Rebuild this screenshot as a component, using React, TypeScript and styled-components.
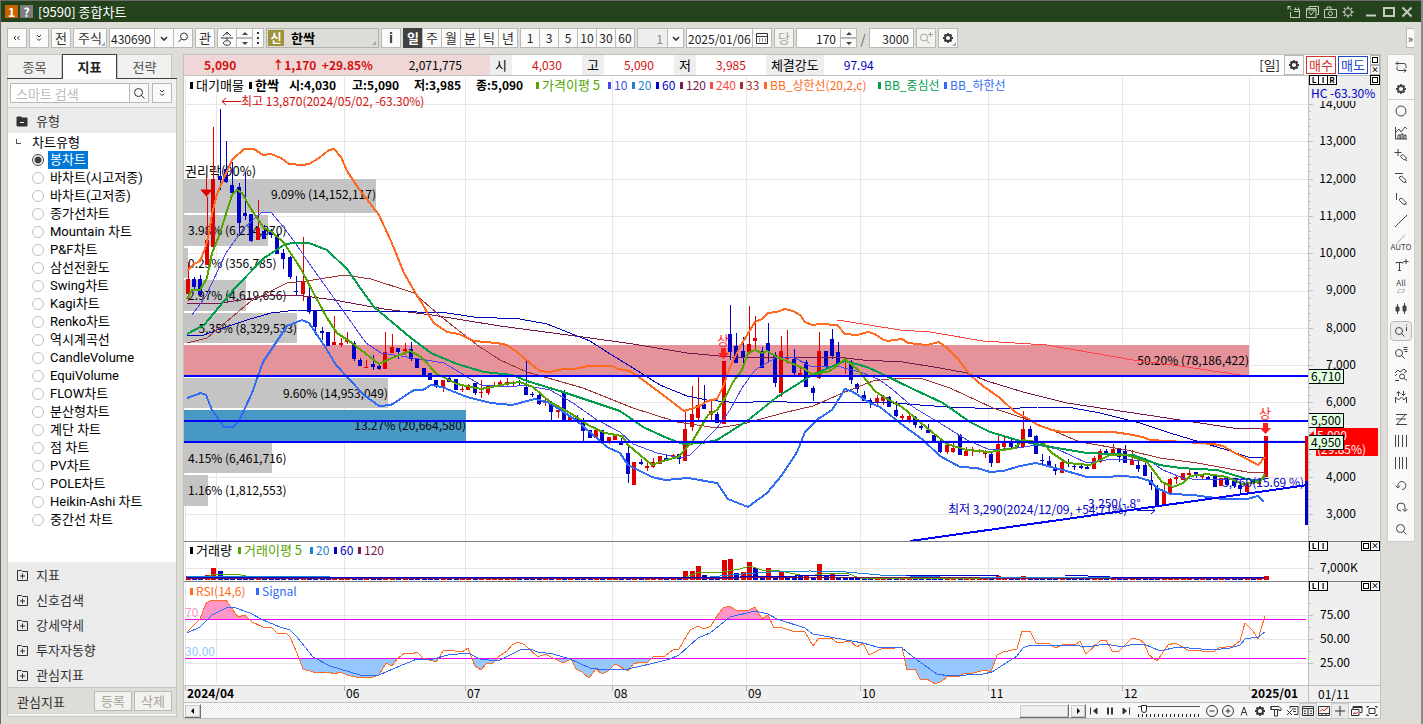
import React from "react";
import styled, { createGlobalStyle, css } from "styled-components";

const GlobalStyle = createGlobalStyle`
  *, *::before, *::after { box-sizing: border-box; }
  body { margin: 0; background: #dddcd6; }
  body, button, input { font-family: "Noto Sans CJK KR", "Liberation Sans", sans-serif; font-size: 13px; color: #222; }
  button, input { margin: 0; padding: 0; border-radius: 0; }
`;

/* ---------- icons ---------- */

const ICONS: Record<string, React.ReactNode> = {
  left: <path d="M7 6 5 8l2 2M10.500 6l-2 2 2 2" />,
  right: <path d="M5 5l3 3-3 3M9 5l3 3-3 3" />,
  down: <path d="M6 5l2 2 2-2M6 8.500l2 2 2-2" />,
  chevron: <path d="M5 7l3 3 3-3" strokeWidth="1.600" />,
  find: (<><circle cx="9" cy="6.500" r="3.500" /><path d="M6.500 9 3.500 12" /></>),
  search: (<><circle cx="7.500" cy="7.500" r="4" /><path d="M10.500 10.500l3 3" /></>),
  stamp: <path d="M8 2v3M8 2 4 6M8 2l4 4M2 8h12M8 8v2M4.500 13c0-3 7-3 7 0s-7 3-7 0" />,
  calendar: <path d="M2.500 3.500h11v10h-11zM2.500 6.500h11M5 9h1M8 9h1M11 9h1M5 11h1M8 11h1M11 11h1" />,
  zoomPlus: (<><circle cx="6" cy="7.500" r="3.500" /><path d="M8.500 10l3 3.500M12.500 2v5M10 4.500h5" /></>),
  gear: (<><circle cx="8" cy="8" r="3" strokeWidth="1.800" /><path d="M8 3v1.500M8 11.500V13M3 8h1.500M11.500 8H13M4.500 4.500l1 1M10.500 10.500l1 1M11.500 4.500l-1 1M5.500 10.500l-1 1" strokeWidth="1.800" /></>),
  sun: (<><circle cx="8" cy="8" r="3.500" /><path d="M8 2.500v2M8 11.500v2M2.500 8h2M11.500 8h2M4 4l1 1M11 11l1 1M12 4l-1 1M5 11l-1 1" strokeWidth="1.600" /></>),
  dock: <path d="M2 2.500l4 4M2 5.500v-3h3M4.500 8v5.500h9v-8H8M9.500 5.500v-2M12.500 5.500v-2M8 7.500h5" />,
  windows: <path d="M5 4V2.500h9.500v8H13M2.500 4.500H12v9H2.500zM5 8l2 3 4-5M2.500 6h9" />,
  camera: (<><path d="M2.500 5.500h12v8h-12zM5 5V3h4v2" /><circle cx="8.500" cy="9.500" r="2" /></>),
  min: <path d="M3 11.500h10" strokeWidth="2" />,
  max: <path d="M3 4h10v8H3z" strokeWidth="2" />,
  close: <path d="M3.500 3.500l9 9M12.500 3.500l-9 9" strokeWidth="2" />,
  folder: (<><path d="M3 4h4l1 1h5v8H3z" fill="currentColor" /><path d="M6 9.500h4" stroke="#fff" /></>),
  folderPlus: <path d="M3.500 3.500h4l1 1h5v9h-10zM8.500 6.500v5M6 9h5" />,
  cycle: <path d="M5 2.500l-2 2 2 2M3 4.500h8a2 2 0 0 1 2 2V9M11 13.500l2-2-2-2M13 11.500H6a2 2 0 0 1-2-2V7.500" />,
  circle: <circle cx="8" cy="8" r="5" />,
  chart: <path d="M2.500 2v12H14M3 7l3-3 2 3 4-5 2 2M5 14v-4h2v4M8 14V9h2v5M11 14v-4h2v4" />,
  crossPen: <path d="M5 2v7M1.500 5.500h7M8 8.500l2-1 3.500 3.500-1 2-2-.5-3-3zM13 13l1 1" />,
  hPen: <path d="M2 4.500h8M6.500 8l2-1 4.500 4.500-1 2-2-.5-3.500-3.500zM12.500 13l1 1" />,
  vPen: <path d="M3.500 2v7M6.500 8l2-1 4.500 4.500-1 2-2-.5-3.500-3.500zM12.500 13l1 1" />,
  line: <path d="M2 14 14 2" />,
  textPlus: <path d="M3 6.500V5.500h7v1M6.500 5.500V13M5 13.500h3M13 2v5M10.500 4.500h5" />,
  candles: (<><path d="M4.500 3v10M11.500 2v11" /><path d="M3 6h3v4H3zM10 5h3v5h-3z" fill="currentColor" /></>),
  zoomInfo: (<><circle cx="6" cy="8" r="3.500" /><path d="M8.500 10.500l3 3M13.500 4v4M13.500 1.500v1" /></>),
  zoomList: (<><circle cx="6" cy="8" r="3.500" /><path d="M8.500 10.500l3 3M10.500 2.500h4M10.500 4.500h4M11.500 6.500h3" /></>),
  zoomWave: (<><path d="M2 6l3-3 2 2 4-3 2 2M2 9l2-2M11 6l3-2M2 13.500h4" /><circle cx="9" cy="9.500" r="2.500" /><path d="M11 11.500l3 2" /></>),
  crown: <path d="M2.500 14V8l3 3 3-3 2.500 3 2.500-3v6M5.500 7V2.500M3.500 4.500l2-2 2 2M10.500 2v4.500M8.500 4.500l2 2 2-2" />,
  zed: <path d="M3 3.500h11M12.500 3.500 4 13M3 8h10M3 13.500h11" />,
  bars: <path d="M2.500 2v12M5.500 2v12M9.500 2v12M13.500 2v12" />,
  bars4: <path d="M2.500 2v12M6.500 2v12M9.500 2v12M13.500 2v12" />,
  undo: <path d="M5 9.500a4 4 0 1 1 4 3M2.500 8.500 5 11l2-2.500" />,
  redo: <path d="M8 12a4 4 0 1 1 4-4v4M9.500 10l2.500 2.500L14.500 10" />,
  first: (<><path d="M4.500 4.500v7" /><path d="M11 5v6L7.500 8z" fill="currentColor" /></>),
  last: (<><path d="M11.500 4.500v7" /><path d="M5 5v6l3.500-3z" fill="currentColor" /></>),
  pause: <path d="M6 4.500v7M10 4.500v7" strokeWidth="2" />,
  minus: (<><circle cx="8" cy="8" r="5.500" /><path d="M5.500 8h5" /></>),
  plus: (<><circle cx="8" cy="8" r="5.500" /><path d="M5.500 8h5M8 5.500v5" /></>),
  letter: <path d="M5 12.500 8 4l3 8.500M6 9.500h4" />,
  paint: <path d="M3 3.500h8l2 2v2h-2v-1H3zM6.500 6.500v6.500h3V6.500M3 3v4" />,
  erase: <path d="M6 5.500V3.500h8v8h-4M8 6h4M9 8.500h3M3 7l5 5M8 7l-5 5" />,
  panel: <path d="M2.500 3.500h11v9h-11zM2.500 5.500h11M8 6v6M4 8h2M4 10.500h2M10 8h2M10 10.500h2" />,
  trend: (<><path d="M2.500 3.500h11v9h-11zM3 10.500h10M6 10.500v2M10 10.500v2" /><path d="M4 8.500l2-2 2 1 4-3" stroke="#d01010" /></>),
  cross: <path d="M8 3v10M3 8h10" />,
  stack: (<><path d="M5 6V3.500h9v6h-2M3.500 6.500H11v6H3.500zM5 4.500h9" /><path d="M5 11l1.500-1.500 1 1.500 2-2" stroke="#d01010" /></>),
  full: <path d="M3 5V3.500h2M11 3.500h2V5M13 11v1.500h-2M5 12.500H3V11M5 5.500h6v5H5z" />,
};

const Glyph = styled.svg`
  width: 16px; height: 16px; flex: none; display: block;
  fill: none; stroke: currentColor; stroke-width: 1;
`;
const Icon = ({ name }: { name: string }) => (
  <Glyph viewBox="0 0 16 16" aria-hidden="true">{ICONS[name]}</Glyph>
);

/* ---------- window frame ---------- */

const Frame = styled.div`
  min-height: 100vh; display: flex; flex-direction: column; background: #dddcd6;
  border-left: 1px solid #6a6a6a; border-right: 2px solid #8a8a8a;
`;
const TitleBar = styled.header`
  height: 22px; background: #24431c; border-top: 1px solid #6a6a6a; color: #fff;
  display: flex; align-items: center; padding: 0 5px 0 4px;
`;
const TitleBadge = styled.span<{ $bg: string }>`
  width: 13px; height: 13px; margin-right: 2px; background: ${(p) => p.$bg}; color: #fff;
  font-size: 12px; font-weight: 700; line-height: 13px; text-align: center;
`;
const Title = styled.h1`margin: 0 auto 0 3px; font-size: 13px; font-weight: 400; line-height: 20px;`;
const TitleGroup = styled.div`display: flex; margin-left: 5px;`;
const TitleButton = styled.button`border: 0; background: none; color: #c4cdc0; width: 18px; display: grid; place-items: center;`;

/* ---------- toolbar ---------- */

const Toolbar = styled.div`height: 32px; padding: 6px 7px 6px 6px; display: flex; align-items: center; gap: 2px;`;
const Group = styled.div`
  display: flex; height: 20px; flex: none;
  & > * + * { margin-left: -1px; }
`;
const Tool = styled.button<{ $w?: number; $on?: boolean; $corner?: boolean }>`
  width: ${(p) => p.$w ?? 20}px; height: 20px; flex: none; display: grid; place-items: center; place-content: center; overflow: hidden;
  border: 1px solid #b9b9b6; background: #fafafa; color: #333; line-height: 16px; font-size: 13px; position: relative;
  &:disabled { color: #aaa496; background: #f2f2f0; }
  ${(p) => p.$on && css`background: #404040; border-color: #404040; color: #fff; font-weight: 700;`}
  ${(p) => p.$corner && css`&::after { content: ""; position: absolute; right: 1px; bottom: 1px; border: 2px solid #aaa; border-top-color: transparent; border-left-color: transparent; }`}
`;
const Num = styled.span`font-size: 12px; color: #222;`;
const Field = styled.input<{ $w: number; $right?: boolean }>`
  width: ${(p) => p.$w}px; height: 20px; border: 1px solid #b9b9b6; background: #fff; font-size: 12px;
  padding: 0 ${(p) => (p.$right ? 4 : 1)}px;
  text-align: ${(p) => (p.$right ? "right" : "left")};
  &:disabled { background: #eee; color: #888; }
`;
const Stepper = styled.div`display: flex; flex-direction: column; width: 17px;`;
const Step = styled.button<{ $down?: boolean }>`
  height: 10px; border: 1px solid #b9b9b6; background: #fafafa; display: grid; place-items: center;
  &::after { content: ""; border: 3px solid transparent; border-top-width: ${(p) => (p.$down ? 3 : 0)}px; border-bottom-width: ${(p) => (p.$down ? 0 : 3)}px;
    border-top-color: #444; border-bottom-color: #444; }
`;
const Grip = styled.div`width: 12px; height: 20px; border: 1px solid #b9b9b6; background: #fafafa; display: grid; place-content: center; gap: 3px;
  i { width: 2px; height: 2px; background: #333; }`;
const StockName = styled.button`
  width: 113px; height: 20px; border: 1px solid #b0b0ad; background: #dddcd6; display: flex; align-items: center; gap: 7px;
  font-size: 13px; font-weight: 700; line-height: 16px; color: #000; position: relative; padding-left: 1px;
  &::after { content: ""; position: absolute; right: 2px; bottom: 2px; border: 2px solid #aaa; border-top-color: transparent; border-left-color: transparent; }
`;
const NameMark = styled.span`width: 16px; height: 16px; background: #a0923a; color: #fff; font-size: 12px; line-height: 15px;`;
const Slash = styled.span`width: 8px; text-align: center; color: #666;`;
const FoldTab = styled.button`margin-left: auto; width: 8px; height: 20px; border: 1px solid #b9b9b6; border-right: 0; background: #fafafa; font-size: 11px; line-height: 14px;`;

/* ---------- left panel ---------- */

const Main = styled.main`display: flex; align-items: flex-start; padding: 0 6px 6px; flex: 1;`;
const Side = styled.aside`width: 170px; flex: none; margin-right: 6px; height: 663px; display: flex; flex-direction: column; border: 1px solid #c6c6c3; border-top: 0; background: #fff;`;
const Tabs = styled.div`display: flex; height: 25px; margin: 0 -1px; border-bottom: 1px solid #404040; background: #dddcd6; flex: none;`;
const Tab = styled.button<{ $on?: boolean }>`
  width: 55px; height: ${(p) => (p.$on ? 25 : 24)}px; border: 1px solid #c6c6c3; background: #f0f0ef; color: #555; line-height: 20px; border-bottom: 0;
  ${(p) => p.$on && css`border-color: #404040; background: #fff; color: #222; font-weight: 700;`}
`;
const SearchRow = styled.div`display: flex; gap: 3px; padding: 4px 4px 4px 2px; height: 29px; background: #f1f1f0; border-bottom: 1px solid #d0d0cd; flex: none;`;
const SearchBox = styled.div`display: flex; flex: 1; min-width: 0; 
  input { flex: 1; min-width: 0; width: 0; font-size: 13px; padding: 0 5px; height: 20px; border: 1px solid #b9b9b6; }
  input::placeholder { color: #bbb; } button { margin-left: -1px; }`;
const Fold = styled.button`
  height: 25px; width: 100%; flex: none; display: flex; align-items: center; gap: 6px; padding: 0 6px; border: 0; background: #ebebeb; text-align: left; color: #333; line-height: 20px;
`;
const Tree = styled.fieldset`border: 0; margin: 0; padding: 0; min-width: 0; flex: 1; overflow: hidden;`;
const TreeHead = styled.legend`height: 18px; line-height: 18px; padding: 0 0 0 24px; position: relative; color: #000;
  &::before { content: ""; position: absolute; left: 8px; top: 6px; width: 5px; height: 5px; border-left: 1px solid #555; border-bottom: 1px solid #555; }`;
const TreeItem = styled.label`display: flex; align-items: center; height: 18px; padding-left: 24px; gap: 4px; color: #000;
  font-family: Roboto, "Noto Sans CJK KR", sans-serif; font-size: 13px; line-height: 18px;`;
const Radio = styled.input`
  appearance: none; width: 12px; height: 12px; border: 1px solid #bfbfbf; border-radius: 50%; background: #fff; flex: none;
  &:checked { border-color: #404040; background: radial-gradient(circle, #404040 3px, #fff 4px); }
  & + span { padding: 0 2px; }
  &:checked + span { background: #0078d7; color: #fff; }
`;
const SideFoot = styled.div`height: 29px; flex: none; border-top: 1px solid #c6c6c3; border-bottom: 2px solid #f4f4f4; background: #dddcd6; display: flex; align-items: center; gap: 2px; padding: 0 4px 0 9px; color: #333;
  span { flex: 1; }`;

/* ---------- chart panel ---------- */

const ChartPanel = styled.section`flex: 1; min-width: 0; border: 1px solid #c0c0c0; background: #fff;`;
const Quote = styled.div`height: 21px; display: flex; border-bottom: 1px solid #c0c0c0; font-size: 12px; line-height: 20px;`;
const Summary = styled.div`width: 306px; flex: none; background: #f0d7d7; display: flex; color: #000; justify-content: space-between; padding: 0 28px 0 20px;
  strong { color: #d21010; } `;
const QLabel = styled.span`background: #eee; padding: 0 5px; font-size: 13px; color: #000;`;
const QValue = styled.span<{ $blue?: boolean }>`width: 70px; text-align: center; color: ${(p) => (p.$blue ? "#0000c8" : "#d21010")};`;
const QuoteTools = styled.div`margin-left: auto; display: flex; align-items: center; gap: 2px; font-size: 13px; & > span { margin-right: 2px; }`;
const Order = styled.button<{ $c: string }>`width: 30px; height: 18px; border: 1px solid ${(p) => p.$c}; color: ${(p) => p.$c}; background: #fff; line-height: 14px;`;
const MiniStack = styled.div`display: flex; flex-direction: column; width: 10px;`;
const Mini = styled.button<{ $light?: boolean }>`
  width: 10px; height: 10px; flex: none; border: 1px solid ${(p) => (p.$light ? "#b0b0b0" : "#000")}; background: #fff; display: grid; place-items: center; place-content: center;
  font-size: 8px; line-height: 8px; font-weight: 700; color: #000; overflow: hidden;
  i { width: 6px; height: 6px; border: 1px solid #000; }
`;
const Pane = styled.div<{ $h: number; $last?: boolean }>`
  height: ${(p) => p.$h}px; display: flex; border-bottom: 1px solid ${(p) => (p.$last ? "#c0c0c0" : "#808080")};
`;
const Plot = styled.svg`flex: 1; min-width: 0; height: 100%; display: block; overflow: hidden;
  text { font-size: 12px; white-space: pre; } .ko { font-size: 13px; } .b { font-weight: 700; }`;
const AxisCol = styled.div`width: 72px; flex: none; position: relative; background: #efefef; border-left: 1px solid #c0c0c0;`;
const AxisSvg = styled(Plot)`width: 100%;`;
const Corner = styled.div<{ $right?: boolean }>`position: absolute; top: -1px; display: flex; ${(p) => (p.$right ? "right: 0;" : "left: 0;")}
  & > * + * { margin-left: -1px; }`;
const TimeRow = styled.div`height: 17px; display: flex; background: #efefef; border-bottom: 1px solid #c0c0c0;`;
const TimeEnd = styled.div`width: 72px; flex: none; border-left: 1px solid #c0c0c0; padding-left: 9px; font-size: 12px; line-height: 16px; color: #000;`;
const BottomRow = styled.div`height: 15px; display: flex; align-items: center; background: #f7f7f7;`;
const Track = styled.div`flex: 1; height: 14px; display: flex; justify-content: flex-end; gap: 1px;
  background: repeating-conic-gradient(#ececec 0 25%, #fff 0 50%) 0 0 / 2px 2px;`;
const Raised = styled.button<{ $w: number }>`width: ${(p) => p.$w}px; height: 14px; border: 1px solid; border-color: #fff #707070 #707070 #fff; box-shadow: 0 0 0 1px #c8c8c8 inset; background: #f0f0f0; display: grid; place-items: center; flex: none;`;
const Arrow = styled.i<{ $right?: boolean }>`border: 3px solid transparent; ${(p) => (p.$right ? "border-left-color: #000; border-right-width: 0;" : "border-right-color: #000; border-left-width: 0;")}`;
const BarIcon = styled.button<{ $on?: boolean }>`width: 16px; height: 14px; border: 0; background: ${(p) => (p.$on ? "#e9e9e9" : "none")}; outline: ${(p) => (p.$on ? "1px solid #ccc" : "none")}; display: grid; place-items: center; place-content: center; color: #333; overflow: hidden; flex: none;`;
const Zoomer = styled.input`
  appearance: none; width: 62px; height: 13px; margin: 0 4px; background:
    linear-gradient(#555, #555) 0 2px / 100% 1px no-repeat,
    repeating-linear-gradient(90deg, #222 0 1px, transparent 1px 4px) 0 100% / 100% 3px no-repeat;
  &::-webkit-slider-thumb { appearance: none; width: 6px; height: 8px; border: 1px solid #222; background: #fff; border-radius: 0 0 3px 3px; margin-top: -4px; }
`;
const Rail = styled.nav`width: 28px; flex: none; margin-left: 6px; border: 1px solid #cfcfcd; background: #f9f9f9; height: 488px; display: flex; flex-direction: column; align-items: center; padding: 1px 0;`;
const RailButton = styled.button<{ $on?: boolean }>`
  width: 22px; height: 22px; flex: none; border: 0; background: none; color: #444; display: grid; place-items: center; font-size: 8px; line-height: 8px;
  ${(p) => p.$on && css`border: 1px solid #b9b9b9; border-radius: 4px; background: #ececec; height: 20px; margin: 1px 0;`}
`;
const RailGroup = styled.div`width: 100%; height: 44px; flex: none; display: grid; justify-items: center; border-bottom: 1px solid #cfcfcd;`;

/* ---------- data ---------- */

const UP = "#e00000";
const DOWN = "#0000c8";

/* colour, high, low, body top, body bottom */
const CANDLES = `r262 301 279 294|b277 289 279 287|b275 296 279 295|r197 265 240 265|r127 251 179 247|b109 190 176 180|b141 183 169 182|b162 193 185 193|b183 236 187 223|b172 220 213 216
b214 242 214 241|r200 240 228 240|b225 239 231 239|b229 238 232 235|b234 254 235 254|b249 269 253 259|b256 279 257 277|b276 295 291 292|r237 301 281 294|b287 314 297 312
b310 335 310 327|b327 340 331 333|b332 346 332 346|r316 345 342 345|r338 347 343 345|r332 344 340 342|b341 361 343 359|b358 366 360 366|r360 368 367 368|b355 370 364 367
b365 370 366 369|r332 369 352 369|r334 353 347 353|b348 359 348 352|r343 355 349 351|b342 361 349 359|b359 368 359 368|b368 376 368 376|b373 380 373 380|b380 388 380 386
r380 392 380 387|b377 382 378 382|b379 390 379 390|r386 392 389 390|r384 390 385 390|b383 395 383 393|r380 398 392 393|r386 395 386 393|r382 387 385 387|r380 387 382 386
r378 387 382 384|r381 386 382 384|b380 385 381 383|b360 395 387 395|b392 397 394 395|b393 405 395 404|r399 406 402 403|b401 420 402 412|r405 418 410 412|b390 420 392 420
r412 421 417 420|b415 421 418 421|b418 442 422 431|b430 438 430 438|r430 438 430 438|b430 442 430 442|r437 444 437 442|r434 440 434 440|b438 445 441 445|b447 483 453 474
r462 485 462 485|b459 465 462 464|r463 471 466 468|r458 468 462 467|r456 464 456 464|b455 461 458 460|r454 458 455 457|b454 464 454 459|r411 461 429 461|r386 431 414 427
r377 420 405 418|b385 409 404 409|r401 420 411 415|b412 423 414 423|r361 424 361 424|b305 360 334 352|b333 363 346 363|b337 363 351 357|r306 354 344 352|r316 350 338 341
b347 368 351 368|b323 363 343 351|b352 387 355 383|r336 397 351 393|r330 364 357 359|b349 377 359 373|r367 376 373 375|b360 387 362 387|b386 401 388 393|r332 379 351 378
b351 368 351 366|b329 359 339 356|b342 364 352 364|r357 374 360 362|b360 384 364 380|b383 393 384 389|b391 401 395 401|b398 408 400 402|r395 406 398 403|r395 405 397 401
b396 407 397 407|b401 417 410 416|r414 420 416 418|r414 423 416 420|b416 428 417 425|b424 430 426 428|b424 433 430 433|b433 443 435 443|b438 453 443 452|r444 454 445 452
r443 453 448 452|b434 455 435 455|r447 456 451 456|r447 456 449 451|r449 453 451 452|r450 458 452 454|b452 467 454 463|r434 463 444 463|r437 448 442 447|b438 448 442 447
b442 448 445 447|r411 447 429 447|b426 437 429 437|b435 454 436 454|b454 464 460 461|b456 467 461 467|b464 475 469 471|r461 473 462 473|b459 467 462 464|b465 470 466 467
b464 469 466 468|b465 469 467 469|r456 469 458 469|r449 463 451 462|b449 455 451 454|r444 456 449 454|b448 462 449 457|b445 463 451 463|r450 465 460 465|b459 472 465 469
b458 476 465 476|b472 490 480 485|b485 507 488 507|r484 505 492 504|r478 494 479 494|r476 484 477 479|r473 480 473 480|r468 476 473 475|b472 478 472 474|r474 479 475 477
b476 480 477 479|b476 487 476 487|r478 486 478 486|b476 485 480 485|b479 488 481 486|b484 494 485 489|r482 492 484 492|b479 484 481 483|r481 485 482 484|r436 477 436 477`
  .split(/[|\n]/)
  .map((s) => ({ up: s[0] === "r", v: s.slice(1).split(" ").map(Number) }));

const barX = (i: number) => Math.round(187.7 + i * 6.379);

const VOLUME: Record<number, [number, string]> = {
  0: [576, UP], 3: [575, UP], 4: [568, UP], 5: [571, DOWN], 78: [571, UP], 79: [571, UP], 80: [566, UP], 81: [575, DOWN], 82: [577, DOWN], 83: [577, DOWN],
  84: [560, UP], 85: [559, UP], 86: [573, DOWN], 87: [572, UP], 88: [562, UP], 89: [568, DOWN], 90: [577, DOWN], 91: [568, UP], 92: [577, DOWN], 93: [572, UP],
  94: [577, DOWN], 95: [576, DOWN], 96: [576, DOWN], 97: [576, UP], 98: [577, DOWN], 99: [564, UP], 100: [576, DOWN], 101: [574, UP], 102: [577, DOWN], 103: [578, DOWN],
  127: [576, UP], 131: [576, UP], 169: [576, UP],
};

const UPPER = "187,271 194,264 200,261 205,249 209,233 212,214 217,194 224,178 232,160 244,149 254,149 263,155 271,154 281,158 289,164 302,165 309,164 319,158 329,150 334,149 341,157 347,171 359,189 379,215 391,241 404,273 416,294 422,303 429,316 434,323 447,332 459,334 474,341 497,343 507,345 517,352 530,363 540,371 550,372 563,369 575,369 588,366 612,366 618,369 630,371 643,380 663,395 684,411 700,406 707,401 717,399 723,387 730,367 740,347 747,335 755,322 762,319 768,313 777,312 785,309 793,311 800,315 805,322 812,325 820,324 837,325 845,334 857,335 868,332 875,334 882,339 887,341 902,339 908,343 927,345 939,342 947,348 958,359 970,375 983,386 1000,398 1015,412 1027,418 1038,425 1052,430 1062,432 1113,432 1127,434 1143,437 1150,440 1185,442 1213,444 1223,446 1233,452 1247,459 1258,465 1265,457";
const LOWER = "187,398 201,393 206,395 212,410 224,427 233,427 239,421 252,393 263,362 287,326 302,320 309,323 324,345 336,365 364,395 379,406 391,405 414,390 423,390 431,385 442,387 467,397 491,403 512,405 535,399 550,403 577,421 607,447 620,453 628,465 652,477 665,480 688,478 717,483 728,499 748,507 767,493 782,475 797,452 805,432 818,419 832,410 845,389 853,392 870,403 880,407 900,423 923,440 940,456 960,467 977,468 990,472 1003,471 1020,466 1036,463 1063,470 1087,477 1107,477 1120,476 1137,477 1150,481 1157,488 1170,494 1193,495 1223,499 1247,499 1258,496 1264,502";
const MIDDLE = "187,334 204,325 219,307 234,289 264,258 284,245 292,243 309,243 327,250 347,269 361,289 374,307 411,338 431,353 457,364 484,372 512,375 527,381 563,392 593,402 620,411 643,427 667,438 683,444 703,443 717,440 747,421 777,397 812,375 845,361 867,367 880,373 913,389 943,403 970,422 990,432 1020,441 1057,448 1087,453 1133,455 1160,465 1180,468 1217,470 1247,479 1258,481 1265,477";
const MA5 = "187,299 192,290 200,290 207,278 212,253 219,236 226,214 232,195 237,190 242,193 251,209 264,228 272,232 284,243 301,269 314,294 319,303 327,318 337,333 352,343 379,364 392,358 410,351 421,357 437,374 457,384 481,389 512,383 520,382 533,387 550,402 570,413 588,425 605,433 622,436 628,445 652,465 663,461 678,457 692,442 708,415 717,410 725,398 733,382 742,370 748,353 755,350 762,353 767,351 777,357 805,369 812,375 830,371 845,359 858,370 875,391 882,396 902,407 932,432 947,444 967,450 990,452 1015,448 1023,440 1043,443 1052,453 1067,463 1090,465 1110,455 1127,455 1147,462 1162,482 1173,487 1183,483 1190,476 1207,474 1227,477 1242,484 1260,482 1265,474";
const MA10 = "192,315 206,296 226,253 244,228 262,212 271,212 284,228 294,241 311,266 344,312 366,343 381,353 401,356 444,363 481,385 512,387 523,385 550,390 573,403 597,420 620,432 633,444 657,453 682,458 690,455 717,428 730,410 742,388 755,370 777,357 793,357 812,367 837,366 863,373 880,380 893,390 913,407 943,425 967,440 990,450 1017,448 1037,445 1057,449 1087,463 1113,459 1150,461 1163,470 1183,478 1200,480 1265,479";
const MA33 = "187,343 207,338 232,317 251,301 287,283 307,281 344,275 371,279 414,293 439,315 477,345 500,360 527,372 583,388 633,408 677,422 717,428 743,424 783,413 813,406 845,392 873,381 897,378 923,379 950,388 993,408 1023,418 1047,428 1080,442 1127,450 1160,458 1197,463 1247,472 1265,472";
const MA60 = "187,336 204,335 217,330 247,320 271,313 297,310 351,311 417,312 447,313 474,317 520,319 547,324 590,341 607,352 633,368 660,385 687,396 707,400 740,403 767,401 807,403 837,402 893,403 947,407 1003,409 1037,407 1073,408 1100,413 1140,423 1170,433 1200,442 1227,450 1248,457 1263,457";
const MA120 = "187,303 221,303 267,296 297,295 334,300 384,309 432,315 500,326 583,337 633,344 687,353 730,357 845,358 863,360 903,362 940,368 967,373 987,381 1023,392 1067,403 1127,412 1180,420 1233,428 1265,429";
const MA240 = "837,320 850,322 900,330 930,332 983,341 1047,345 1093,353 1133,360 1180,366 1240,375 1265,377";

const LINES: [string, string, number][] = [
  [MA240, "#ff4646", 1], [MA120, "#78184e", 1], [MA60, "#0000b8", 1], [MA33, "#a03232", 1], [MA10, "#4646f0", 1],
  [LOWER, "#2f6bf5", 2], [MIDDLE, "#009e4b", 2], [UPPER, "#ff6a20", 2], [MA5, "#55a500", 2],
];

const RSI = "187,632 200,619 206,603 212,600 226,600 238,617 245,615 252,622 263,627 271,627 277,633 287,634 290,637 297,653 303,669 313,672 328,672 335,674 340,672 347,675 360,678 373,677 379,675 386,663 392,666 398,658 405,653 412,654 417,652 423,658 436,662 443,651 448,650 462,652 468,648 475,666 481,670 487,663 493,663 498,657 507,651 512,645 518,642 525,645 538,657 545,654 563,663 571,659 576,669 582,672 589,678 596,669 602,674 608,671 615,664 628,671 633,664 640,662 647,663 653,657 665,656 673,650 679,649 690,630 698,626 704,629 711,626 717,616 723,608 729,606 736,610 749,610 755,607 762,619 768,615 774,628 780,627 792,631 805,632 813,646 818,639 831,638 838,643 850,641 857,647 863,643 869,655 883,648 889,649 902,647 907,670 915,669 920,679 927,679 935,684 942,681 947,677 960,676 965,673 973,673 985,670 991,672 997,655 1003,652 1017,649 1022,631 1030,631 1036,643 1050,644 1055,648 1065,644 1075,645 1080,641 1086,654 1100,641 1106,640 1112,651 1119,651 1132,638 1140,640 1144,643 1149,655 1157,661 1168,645 1175,643 1188,650 1202,651 1215,651 1219,648 1233,646 1240,641 1245,623 1253,631 1258,639 1265,616";
const SIGNAL = "187,633 200,627 212,615 226,608 233,607 250,613 263,620 280,627 290,630 297,637 313,657 330,666 360,675 379,675 395,668 417,659 433,659 448,655 468,653 480,659 498,661 520,650 530,649 538,652 553,654 570,659 590,668 605,670 628,669 650,664 670,659 679,655 698,638 710,633 730,617 755,611 768,614 777,619 805,628 813,634 863,643 877,647 902,648 917,660 937,674 950,676 983,674 992,672 1017,656 1023,648 1030,645 1073,645 1087,647 1105,644 1123,647 1133,644 1144,644 1160,651 1177,647 1213,650 1230,648 1240,645 1245,639 1258,637 1265,632";

/* y, height, right edge, label, label anchor x, anchored at end, fill */
const PROFILE: [number, number, number, string, number, boolean, string][] = [
  [179, 34, 376, "9.09% (14,152,117)", 376, true, "#c4c4c4"],
  [215, 31, 268, "3.98% (6,214,870)", 188, false, "#c4c4c4"],
  [248, 30, 188, "0.23% (356,785)", 188, false, "#c4c4c4"],
  [280, 31, 246, "2.97% (4,619,656)", 188, false, "#c4c4c4"],
  [313, 30, 297, "5.35% (8,329,533)", 297, true, "#c4c4c4"],
  [345, 31, 1249, "50.20% (78,186,422)", 1249, true, "#e5929a"],
  [378, 30, 388, "9.60% (14,953,049)", 388, true, "#c4c4c4"],
  [410, 31, 466, "13.27% (20,664,580)", 466, true, "#4898c6"],
  [443, 30, 272, "4.15% (6,461,716)", 188, false, "#c4c4c4"],
  [475, 31, 208, "1.16% (1,812,553)", 188, false, "#c4c4c4"],
];

type Legend = [number, string, string, string?];
const PRICE_LEGEND: Legend[] = [
  [190, "대기매물", "#000"], [249, "한싹", "#000", "b"], [536, "가격이평 5", "#55a500"], [608, "10", "#4646f0"], [632, "20", "#1882d8"],
  [656, "60", "#0000c8"], [680, "120", "#78184e"], [710, "240", "#ff4646"], [740, "33", "#a03232"], [764, "BB_상한선(20,2,c)", "#ff6a20"],
  [878, "BB_중심선", "#009e4b"], [944, "BB_하한선", "#2f6bf5"],
];
const VOLUME_LEGEND: Legend[] = [[190, "거래량", "#000"], [238, "거래이평 5", "#55a500"], [310, "20", "#1882d8"], [334, "60", "#0000c8"], [358, "120", "#78184e"]];
const RSI_LEGEND: Legend[] = [[190, "RSI(14,6)", "#ff6a20"], [256, "Signal", "#2f6bf5"]];
const MONTHS: [number, string, string?][] = [
  [185, "2024/04", "b"], [344, "06"], [465, "07"], [612, "08"], [746, "09"], [860, "10"], [988, "11"], [1122, "12"], [1249, "2025/01", "b"],
];
const GRID_X = [185, 216, 344, 465, 612, 746, 860, 988, 1122, 1249];

const CHART_TYPES = ["봉차트", "바차트(시고저종)", "바차트(고저종)", "종가선차트", "Mountain 차트", "P&F차트", "삼선전환도", "Swing차트", "Kagi차트", "Renko차트", "역시계곡선", "CandleVolume", "EquiVolume", "FLOW차트", "분산형차트", "계단 차트", "점 차트", "PV차트", "POLE차트", "Heikin-Ashi 차트", "중간선 차트"];
const RAIL = ["circle", "chart", "crossPen", "hPen", "vPen", "line", "auto", "textPlus", "all", "candles", "zoomInfo", "zoomList", "zoomWave", "crown", "zed", "bars", "bars4", "undo", "redo", "search"];

/* ---------- chart pieces ---------- */

const Grid = ({ ys, top, bottom }: { ys: number[]; top: number; bottom: number }) => (
  <g stroke="#e6e6e6" shapeRendering="crispEdges">
    {ys.map((y) => <path key={y} d={`M185 ${y}.5H4000`} />)}
    {GRID_X.map((x) => <path key={x} d={`M${x}.5 ${top}V${bottom}`} />)}
  </g>
);
const LegendRow = ({ items, y }: { items: Legend[]; y: number }) => (
  <>
    {items.map(([x, label, fill, weight]) => (
      <g key={x} fill={fill}>
        <rect x={x} y={y - 3} width="3" height="7" />
        <text className={/^[가-힣]/.test(label) ? `ko ${weight ?? ""}` : weight} x={x + 6} y={y + 5}>{label}</text>
      </g>
    ))}
  </>
);
const Candles = () => (
  <g shapeRendering="crispEdges">
    {CANDLES.map(({ up, v }, i) => (
      <g key={i} fill={up ? UP : DOWN}>
        <rect x={barX(i)} y={v[0]} width="1" height={v[1] - v[0]} />
        <rect x={barX(i) - 2} y={v[2]} width="4" height={Math.max(1, v[3] - v[2])} />
      </g>
    ))}
  </g>
);
const DownMark = ({ x, y }: { x: number; y: number }) => (
  <path d={`M${x - 2} ${y}h5v5h3l-5.500 6-5.500-6h3z`} fill="#ff1e1e" />
);

const PricePlot = () => (
  <Plot role="img" aria-label="한싹 일봉 차트">
    <g transform="translate(-184 -76)">
      <Grid ys={[104, 141, 179, 216, 253, 291, 328, 365, 402, 440, 477, 514]} top={77} bottom={540} />
      {PROFILE.map(([y, h, r, label, x, end, fill]) => (
        <g key={y}>
          <rect x="184" y={y} width={r - 184} height={h} fill={fill} />
          <text x={x} y={y + 20} textAnchor={end ? "end" : "start"}>{label}</text>
        </g>
      ))}
      <text className="ko" x="185" y="176">권리락(90%)</text>
      <Candles />
      <g fill="none" shapeRendering="crispEdges" strokeLinejoin="round">
        {LINES.map(([p, c, w]) => <polyline key={c} points={p} stroke={c} strokeWidth={w} />)}
      </g>
      <g stroke="#0000ff" strokeWidth="2" shapeRendering="crispEdges">
        <path d="M184 376H4000M184 421H4000M184 442H4000M910 541 1308 485" />
      </g>
      <rect x="1305" y="436" width="3" height="45" fill={UP} />
      <rect x="1305" y="481" width="3" height="44" fill={DOWN} />
      <LegendRow items={PRICE_LEGEND} y={85} />
      <text className="b" y="90"><tspan x="289">시:4,030</tspan><tspan x="352">고:5,090</tspan><tspan x="414">저:3,985</tspan><tspan x="476">종:5,090</tspan></text>
      <g fill="#d21010">
        <path d="M241 101.500H222M226 98l-4 3.500 4 3.500" stroke="#d21010" fill="none" />
        <text x="241" y="106">최고 13,870(2024/05/02, -63.30%)</text>
      </g>
      <path d="M206.500 177v20M201 190h11l-5.500 6z" stroke="#e00000" fill="#e00000" />
      <text className="ko" x="717" y="345" fill="#ff1e1e">상</text>
      <DownMark x={723} y={348} />
      <text className="ko" x="1259" y="418" fill="#ff1e1e">상</text>
      <DownMark x={1265} y={423} />
      <g fill="#0000c8">
        <text x="948" y="514">최저 3,290(2024/12/09, +54.71%)</text>
        <text x="1088" y="508">3,250(-.8°</text>
        <text x="1304" y="487" textAnchor="end">3,760(15.69 %)</text>
        <path d="M1137 510.500h18M1151 507l4 3.500-4 3.500" stroke="#0000c8" fill="none" />
      </g>
    </g>
  </Plot>
);

const PRICES = [14, 13, 12, 11, 10, 9, 8, 7, 6, 5, 4, 3];
const PriceAxis = () => (
  <AxisSvg aria-hidden="true">
    <g transform="translate(-1309 -76)">
      <g stroke="#c0c0c0" shapeRendering="crispEdges">
        {Array.from({ length: 59 }, (_, i) => {
          const y = Math.round(104 + i * 7.45);
          return y < 540 ? <path key={i} d={`M1309 ${y}.5h${i % 5 ? 2 : 4}`} /> : null;
        })}
      </g>
      {PRICES.map((p) => (
        <text key={p} x="1356" y={Math.round(108 + (14 - p) * 37.27)} textAnchor="end">{p},000</text>
      ))}
      <rect x="1312" y="86" width="66" height="15" fill="#efefef" />
      <text x="1311" y="98" fill="#0000c8">HC -63.30%</text>
      <rect x="1316" y="428" width="62" height="28" fill="#ff0000" />
      <path d="M1309 435l5-4v7z" fill="#ff0000" />
      <g fill="#fff"><text x="1317" y="440">5,090</text><text x="1317" y="454">(29.85%)</text></g>
      {([[369, "6,710"], [413, "5,500"], [435, "4,950"]] as [number, string][]).map(([y, t]) => (
        <g key={t}>
          <rect x="1308.500" y={y + 0.5} width="35" height="14" fill="#e1ffe1" stroke="#000" />
          <text x="1311" y={y + 12}>{t}</text>
        </g>
      ))}
    </g>
  </AxisSvg>
);

const VolumePlot = () => (
  <Plot role="img" aria-label="거래량">
    <g transform="translate(-184 -542)">
      <Grid ys={[568]} top={542} bottom={581} />
      <g shapeRendering="crispEdges">
        {CANDLES.map((c, i) => {
          const [top, fill] = VOLUME[i] ?? [578, c.up ? UP : DOWN];
          return <rect key={i} x={barX(i) - 2} y={top} width="5" height={580 - top} fill={fill} />;
        })}
        <g fill="none">
          <polyline points="187,577 205,577 216,574 235,574 246,576 330,578 683,578 700,572 716,573 740,569 750,566 762,570 775,570 800,575 815,575 830,573 846,573 860,578 1265,578" stroke="#55a500" />
          <polyline points="187,576 330,577 700,578 730,575 770,572 810,571 846,572 880,575 940,577 1160,578" stroke="#1882d8" />
          <polyline points="187,577 548,577 690,578 740,577 850,575 905,575 940,576 1000,575 1065,575 1110,577 1265,578" stroke="#0000c8" />
          <path d="M187 578.500H700L780 577.500H960L1000 578.500H1265" stroke="#78184e" />
        </g>
      </g>
      <LegendRow items={VOLUME_LEGEND} y={550} />
    </g>
  </Plot>
);

const RsiPlot = () => (
  <Plot role="img" aria-label="RSI">
    <defs>
      <clipPath id="over"><rect x="184" y="580" width="1124" height="39" /></clipPath>
      <clipPath id="under"><rect x="184" y="658" width="1124" height="30" /></clipPath>
    </defs>
    <g transform="translate(-184 -582)">
      <Grid ys={[615, 639, 663]} top={583} bottom={683} />
      <polygon points={`187,619 ${RSI} 1265,619`} fill="#ff96c8" clipPath="url(#over)" />
      <polygon points={`187,658 ${RSI} 1265,658`} fill="#96c8ff" clipPath="url(#under)" />
      <text x="185" y="617" fill="#ff96c8">70</text>
      <text x="185" y="656" fill="#96c8ff">30.00</text>
      <g fill="none" shapeRendering="crispEdges">
        <path d="M185 619.500H1306M185 658.500H1306" stroke="#f000f0" />
        <polyline points={RSI} stroke="#ff6a20" />
        <polyline points={SIGNAL} stroke="#2f6bf5" />
      </g>
      <LegendRow items={RSI_LEGEND} y={591} />
    </g>
  </Plot>
);

const SubAxis = ({ top, labels }: { top: number; labels: [number, string][] }) => (
  <AxisSvg aria-hidden="true">
    <g transform={`translate(-1309 ${-top})`}>
      {labels.map(([y, t]) => (
        <g key={t}>
          <path d={`M1309 ${y}.5h4M1309 ${y - 12}.5h2`} stroke="#c0c0c0" />
          <text x="1320" y={y + 4}>{t}</text>
        </g>
      ))}
    </g>
  </AxisSvg>
);

const PaneCorners = ({ letters, closable }: { letters: string[]; closable?: boolean }) => (
  <>
    <Corner>{letters.map((l) => <Mini key={l}>{l}</Mini>)}</Corner>
    <Corner $right><Mini aria-label="확대"><i /></Mini>{closable && <Mini aria-label="닫기">×</Mini>}</Corner>
  </>
);

/* ---------- page ---------- */

export default function App() {
  return (
    <Frame>
      <GlobalStyle />
      <TitleBar>
        <TitleBadge $bg="#c86400">1</TitleBadge>
        <TitleBadge $bg="#7d7d7d">?</TitleBadge>
        <Title>[9590] 종합차트</Title>
        <TitleGroup>
          {["dock", "windows", "camera", "sun"].map((n) => <TitleButton key={n} aria-label={n}><Icon name={n} /></TitleButton>)}
        </TitleGroup>
        <TitleGroup>
          {["min", "max", "close"].map((n) => <TitleButton key={n} aria-label={n}><Icon name={n} /></TitleButton>)}
        </TitleGroup>
      </TitleBar>

      <Toolbar>
        <Tool aria-label="이전"><Icon name="left" /></Tool>
        <Tool aria-label="펼치기"><Icon name="down" /></Tool>
        <Tool>전</Tool>
        <Tool $w={34} $corner>주식</Tool>
        <Group>
          <Field $w={46} aria-label="종목코드" defaultValue="430690" />
          <Tool aria-label="종목 목록"><Icon name="chevron" /></Tool>
          <Tool aria-label="종목 찾기"><Icon name="find" /></Tool>
        </Group>
        <Tool>관</Tool>
        <Group>
          <Tool aria-label="송신"><Icon name="stamp" /></Tool>
          <Stepper><Step aria-label="위" /><Step $down aria-label="아래" /></Stepper>
          <Grip><i /><i /><i /></Grip>
        </Group>
        <StockName><NameMark>신</NameMark>한싹</StockName>
        <Tool><b>i</b></Tool>
        <Group>
          {["일", "주", "월", "분", "틱", "년"].map((t, i) => <Tool key={t} $on={i === 0}>{t}</Tool>)}
        </Group>
        <Group>
          {["1", "3", "5", "10", "30", "60"].map((t) => <Tool key={t}><Num>{t}</Num></Tool>)}
        </Group>
        <Group>
          <Field $w={31} $right disabled aria-label="주기" defaultValue="1" />
          <Tool $w={17} aria-label="주기 목록"><Icon name="chevron" /></Tool>
        </Group>
        <Group>
          <Field $w={67} aria-label="날짜" defaultValue="2025/01/06" />
          <Tool aria-label="달력"><Icon name="calendar" /></Tool>
        </Group>
        <Tool disabled>당</Tool>
        <Group>
          <Field $w={45} $right aria-label="표시 봉수" defaultValue="170" />
          <Stepper><Step aria-label="늘리기" /><Step $down aria-label="줄이기" /></Stepper>
        </Group>
        <Slash>/</Slash>
        <Field $w={45} $right aria-label="전체 봉수" defaultValue="3000" />
        <Tool disabled aria-label="추가 조회"><Icon name="zoomPlus" /></Tool>
        <Tool $corner aria-label="설정"><Icon name="gear" /></Tool>
        <FoldTab aria-label="접기">»</FoldTab>
      </Toolbar>

      <Main>
        <Side>
          <Tabs role="tablist">
            <Tab role="tab">종목</Tab><Tab role="tab" $on aria-selected>지표</Tab><Tab role="tab">전략</Tab>
          </Tabs>
          <SearchRow>
            <SearchBox>
              <input aria-label="스마트 검색" placeholder="스마트 검색" />
              <Tool aria-label="검색"><Icon name="search" /></Tool>
            </SearchBox>
            <Tool aria-label="모두 펼치기"><Icon name="down" /></Tool>
          </SearchRow>
          <Fold><Icon name="folder" />유형</Fold>
          <Tree>
            <TreeHead>차트유형</TreeHead>
            {CHART_TYPES.map((t, i) => (
              <TreeItem key={t}><Radio type="radio" name="chart-type" defaultChecked={i === 0} /><span>{t}</span></TreeItem>
            ))}
          </Tree>
          {["지표", "신호검색", "강세약세", "투자자동향", "관심지표"].map((t) => (
            <Fold key={t}><Icon name="folderPlus" />{t}</Fold>
          ))}
          <SideFoot><span>관심지표</span><Tool $w={38} disabled>등록</Tool><Tool $w={38} disabled>삭제</Tool></SideFoot>
        </Side>

        <ChartPanel>
          <Quote>
            <Summary><strong>5,090</strong><strong>↑1,170&nbsp; +29.85%</strong><span>2,071,775</span></Summary>
            <QLabel>시</QLabel><QValue>4,030</QValue>
            <QLabel>고</QLabel><QValue>5,090</QValue>
            <QLabel>저</QLabel><QValue>3,985</QValue>
            <QLabel>체결강도</QLabel><QValue $blue>97.94</QValue>
            <QuoteTools>
              <span>[일]</span>
              <Tool aria-label="차트 설정"><Icon name="gear" /></Tool>
              <Order $c="#d03030">매수</Order>
              <Order $c="#2045d0">매도</Order>
              <MiniStack><Mini $light aria-label="최대화"><i /></Mini><Mini $light aria-label="닫기">×</Mini></MiniStack>
            </QuoteTools>
          </Quote>

          <Pane $h={466}>
            <PricePlot />
            <AxisCol><PriceAxis /><PaneCorners letters={["L", "I", "R"]} /></AxisCol>
          </Pane>
          <Pane $h={40}>
            <VolumePlot />
            <AxisCol><SubAxis top={542} labels={[[568, "7,000K"]]} /><PaneCorners letters={["L", "I"]} closable /></AxisCol>
          </Pane>
          <Pane $h={104} $last>
            <RsiPlot />
            <AxisCol><SubAxis top={582} labels={[[615, "75.00"], [639, "50.00"], [663, "25.00"]]} /><PaneCorners letters={["L", "I"]} closable /></AxisCol>
          </Pane>
          <TimeRow>
            <Plot aria-hidden="true">
              <g transform="translate(-184 -686)">
                {MONTHS.map(([x, t, w]) => (
                  <g key={x}>
                    <path d={`M${x}.5 686v5`} stroke="#b0b0b0" />
                    <text className={w} x={x + 2} y="698">{t}</text>
                  </g>
                ))}
              </g>
            </Plot>
            <TimeEnd>01/11</TimeEnd>
          </TimeRow>
          <BottomRow>
            <Raised $w={17} aria-label="왼쪽"><Arrow /></Raised>
            <Track>
              <Raised $w={50} aria-label="스크롤 위치" />
              <Raised $w={16} aria-label="오른쪽"><Arrow $right /></Raised>
            </Track>
            {["first", "pause", "last"].map((n) => <BarIcon key={n} aria-label={n}><Icon name={n} /></BarIcon>)}
            <Zoomer type="range" aria-label="확대 비율" defaultValue={5} />
            {["minus", "plus", "letter", "gear", "paint", "erase", "panel", "trend", "cross", "stack", "full"].map((n) => (
              <BarIcon key={n} $on={n === "panel" || n === "cross"} aria-label={n}><Icon name={n} /></BarIcon>
            ))}
          </BottomRow>
        </ChartPanel>

        <Rail aria-label="차트 도구">
          <RailGroup>
            <RailButton aria-label="새로고침"><Icon name="cycle" /></RailButton>
            <RailButton aria-label="설정"><Icon name="gear" /></RailButton>
          </RailGroup>
          {RAIL.map((n) => (
            <RailButton key={n} $on={n === "zoomInfo"} aria-label={n}>
              {n === "auto" ? <span>╱<br />AUTO</span> : n === "all" ? <span>All<br />▱</span> : <Icon name={n} />}
            </RailButton>
          ))}
        </Rail>
      </Main>
    </Frame>
  );
}
